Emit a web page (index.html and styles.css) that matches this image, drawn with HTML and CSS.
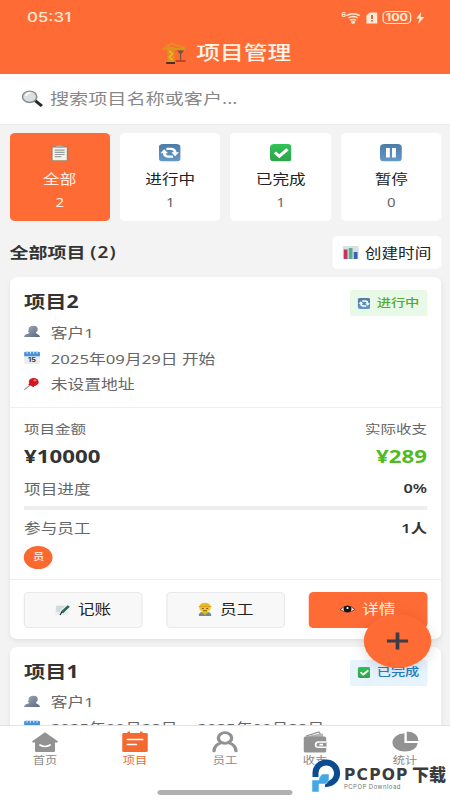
FILE: index.html
```html
<!DOCTYPE html>
<html lang="zh-CN">
<head>
<meta charset="utf-8">
<title>项目管理</title>
<link rel="stylesheet" href="styles.css">
</head>
<body>
<svg class="defs" width="0" height="0">
  <defs>
    <linearGradient id="blue" x2="0" y2="1"><stop offset="0" stop-color="#4d7ba5"/><stop offset="1" stop-color="#6499cb"/></linearGradient>
    <linearGradient id="green" x2="0" y2="1"><stop offset="0" stop-color="#2fc257"/><stop offset="1" stop-color="#30a24c"/></linearGradient>
    <linearGradient id="slate" x2="1" y2="1"><stop offset="0" stop-color="#a2adbd"/><stop offset="1" stop-color="#59687e"/></linearGradient>
    <symbol id="sync" viewBox="0 0 20 20"><rect width="20" height="20" rx="4" fill="url(#blue)"/><g fill="none" stroke="#fff" stroke-width="2.6"><path d="M7 5.500h4q4 0 4 5"/><path d="M13 14.500H9q-4 0-4-5"/></g><path d="M11.500 9.500h7L15 14zM1.500 10.500h7L5 6z" fill="#fff"/></symbol>
    <symbol id="check" viewBox="0 0 20 20"><rect width="20" height="20" rx="4" fill="url(#green)"/><path d="M4.500 9.500l4 4.500 7.500-8" fill="none" stroke="#fff" stroke-width="3"/></symbol>
    <symbol id="pause" viewBox="0 0 20 20"><rect width="20" height="20" rx="4" fill="url(#blue)"/><path d="M5.500 4.500h3.500v11H5.500zM11 4.500h3.500v11H11z" fill="#fff"/></symbol>
    <symbol id="person" viewBox="0 0 20 20"><path d="M11.500 1c4 0 5.500 2.500 5.300 5.500-.2 3-1.300 4-2.300 5 .3 1.500 4.500 2 5 6.500H.5c0-4 4-4.500 6.500-6-1-.8-1.500-1.500-2-2.500 1-.5.8-1.500.8-3C6 3 8 1 11.500 1z" fill="url(#slate)"/></symbol>
    <symbol id="calendar" viewBox="0 0 20 20"><rect x=".5" y="2" width="19" height="17.500" rx="2" fill="#e9edf0"/><path d="M.5 8V3q0-2 2-2h15q2 0 2 2v5z" fill="#4690dc"/><path d="M4 1v3M8 1v3M12 1v3M16 1v3" stroke="#d9ecff" stroke-width="1.300"/><text class="cal-day" x="10" y="17" text-anchor="middle">15</text></symbol>
    <symbol id="pin" viewBox="0 0 20 20"><path d="M9 11L.8 19" stroke="#8c9298" stroke-width="1.400"/><path d="M6.500 11q3 .5 5 3" fill="none" stroke="#b9131c" stroke-width="2" stroke-linecap="round"/><circle cx="12" cy="7.500" r="6" fill="#d4141f"/><circle cx="13.500" cy="5" r="1.800" fill="#f0646b"/></symbol>
  </defs>
</svg>
<div class="screen">
  <header class="header">
    <div class="status">
      <span class="clock">05:31</span>
      <span class="status-icons">
        <svg width="16" height="13" viewBox="0 0 16 13"><g fill="none" stroke="#ffe9d6" stroke-width="1.500"><path d="M4.200 4.700q5.300-3.800 10.600 0M5.700 7q3.800-2.800 7.600 0M7.200 9.300q2.300-1.700 4.600 0"/></g><circle cx="9.500" cy="11.200" r="1.500" fill="#ffe9d6"/><text class="wifi-gen" x="0" y="5.500">6</text></svg>
        <svg width="9" height="12" viewBox="0 0 9 12"><path d="M3 .5h5.500q.5 0 .5.500v10q0 .5-.5.500h-8Q0 11.500 0 11V3.500z" fill="#ffe9d6"/><path d="M4.600 3v4M4.600 8v1.500" stroke="#b85a35" stroke-width="1.300"/></svg>
        <span class="battery">100</span>
        <svg class="bolt" width="8" height="12" viewBox="0 0 8 12"><path d="M5 0L1 6.500h2.500L2.500 12 7.500 5H4.500z" fill="#ffe9d6"/></svg>
      </span>
    </div>
    <div class="title">
      <svg width="19" height="22" viewBox="0 0 19 22"><path d="M4 5h5.500v15H4z" fill="#dc9419"/><path d="M0 7.500L7 1.500l11 4.500M0 7h18" fill="none" stroke="#dc9419" stroke-width="1.800"/><path d="M5.500 9l2.500 3-2.500 3L8 18" fill="none" stroke="#f5bd45" stroke-width="1"/><path d="M14.500 8v10M12.500 9h4l-2 3z" stroke="#74583a" fill="#74583a"/><path d="M3 21h7" stroke="#4b2f25" stroke-width="2"/><path d="M10.500 19h8" stroke="#a93a22" stroke-width="1.500"/></svg>
      <h1>项目管理</h1>
    </div>
  </header>
  <div class="search">
    <svg width="18" height="18" viewBox="0 0 18 18"><path d="M11 10.500l5.500 5.500" stroke="#272727" stroke-width="2.600"/><circle cx="6.700" cy="6.800" r="5.700" fill="#dbe0e2" stroke="#8b8f91" stroke-width="1.300"/><path d="M3.500 6q1-3 4-3" fill="none" stroke="#fff" stroke-width="1.200"/></svg>
    <span>搜索项目名称或客户...</span>
  </div>
  <main class="content">
    <div class="filters">
      <div class="filter active"><svg class="big" viewBox="0 0 20 20"><rect x="2" y="2.500" width="16" height="17" rx="1" fill="#a8805d"/><path d="M3.500 4h13v14.500h-13z" fill="#f3f3ed"/><path d="M6.500 4V2H9l1-1.500L11 2h2.500v2z" fill="#a8aaa9"/><path d="M5.500 7h9M5.500 9.500h9M5.500 12h9M5.500 14.500h6" stroke="#999f9f" stroke-width="1.300"/></svg><b>全部</b><i>2</i></div>
      <div class="filter"><svg class="big"><use href="#sync"/></svg><b>进行中</b><i>1</i></div>
      <div class="filter"><svg class="big"><use href="#check"/></svg><b>已完成</b><i>1</i></div>
      <div class="filter"><svg class="big"><use href="#pause"/></svg><b>暂停</b><i>0</i></div>
    </div>
    <div class="list-head">
      <h2>全部项目 <span>(2)</span></h2>
      <div class="sort"><svg width="13" height="13" viewBox="0 0 13 13"><rect width="13" height="13" rx="1" fill="#d9dfe4"/><path d="M1 3.500h3V13H1z" fill="#c63558"/><path d="M5 2h3v11H5z" fill="#53af91"/><path d="M9 6h3v7H9z" fill="#3c63ad"/></svg><span>创建时间</span></div>
    </div>
    <article class="card">
      <section class="summary">
        <div class="name-row"><h3>项目2</h3><span class="badge doing"><svg><use href="#sync"/></svg>进行中</span></div>
        <p><svg><use href="#person"/></svg>客户1</p>
        <p><svg><use href="#calendar"/></svg>2025年09月29日 开始</p>
        <p><svg><use href="#pin"/></svg>未设置地址</p>
      </section>
      <section class="figures">
        <div class="row labels"><span>项目金额</span><span>实际收支</span></div>
        <div class="row money"><span>¥10000</span><span class="gain">¥289</span></div>
        <div class="row progress-label"><span>项目进度</span><b>0%</b></div>
        <div class="track"></div>
        <div class="row staff"><span>参与员工</span><b>1人</b></div>
        <div class="avatar">员</div>
      </section>
      <section class="actions">
        <div class="button"><svg width="12" height="13" viewBox="0 0 12 13"><path d="M1 2h8l2 10H0z" fill="#e8eeee"/><path d="M1 4h6M1 6h4M1 8h3" stroke="#b8c6c9"/><path d="M11 3L5.500 9.500" stroke="#28685c" stroke-width="2.400"/><path d="M5.500 9L4 12" stroke="#27292a"/></svg>记账</div>
        <div class="button"><svg width="12" height="14" viewBox="0 0 12 14"><path d="M1 14q0-4 3-4h4q3 0 3 4z" fill="#6d8e8b"/><path d="M3 10l3 3 3-3" fill="#e4b02d"/><circle cx="6" cy="5.800" r="4.600" fill="#f4c72e"/><path d="M1.500 4.500C2-.5 10-.5 10.500 4.500z" fill="#edb920"/><path d="M1 4.700h10" stroke="#cf9a18" stroke-width=".8"/><path d="M3.500 6.500h1.500M7 6.500h1.500M4.500 8.700h3" stroke="#7d571c"/></svg>员工</div>
        <div class="button primary"><svg width="12" height="12" viewBox="0 0 12 12"><path d="M0 6.500Q6-.5 12 6.500 6 12 0 6.500z" fill="#f3eeeb" stroke="#713b29" stroke-width=".8"/><circle cx="6" cy="6" r="3.200" fill="#171312"/><circle cx="6" cy="5" r=".9" fill="#fff"/></svg>详情</div>
      </section>
    </article>
    <article class="card">
      <section class="summary">
        <div class="name-row"><h3>项目1</h3><span class="badge done"><svg><use href="#check"/></svg>已完成</span></div>
        <p><svg><use href="#person"/></svg>客户1</p>
        <p class="range"><svg><use href="#calendar"/></svg>2025年09月28日 - 2025年09月28日</p>
      </section>
    </article>
  </main>
  <nav class="tabs">
    <div class="tab"><svg width="22" height="22" viewBox="0 0 22 22"><path d="M11 1.200L21 10q1 1.500-1 1.500h-1V20q0 1-1 1H4q-1 0-1-1v-8.500H2q-2 0-1-1.500z" fill="#929292"/><path d="M7 14q4 3 8 0" fill="none" stroke="#fff" stroke-width="1.600" stroke-linecap="round"/></svg><span>首页</span></div>
    <div class="tab on"><svg width="22" height="22" viewBox="0 0 22 22"><path d="M2 2h3V.5h2V2h8V.5h2V2h3q1.200 0 1.200 1.200v16.600Q21.200 21 20 21H2Q.8 21 .8 19.800V3.200Q.8 2 2 2z" fill="#f4692f"/><path d="M5 8.500h12M5 13.500h7" stroke="#fff" stroke-width="1.700" stroke-linecap="round"/></svg><span>项目</span></div>
    <div class="tab"><svg width="22" height="22" viewBox="0 0 22 22"><g fill="none" stroke="#929292" stroke-width="2.700" stroke-linecap="round"><circle cx="11" cy="7" r="5.300"/><path d="M7.500 12Q2.500 14 2.200 20M14.500 12q5 2 5.300 8"/></g></svg><span>员工</span></div>
    <div class="tab"><svg width="22" height="22" viewBox="0 0 22 22"><path d="M4 5l10-4 2 3" fill="none" stroke="#929292" stroke-width="1.200"/><path d="M7 4.500l8-2 2.500.5V6H3z" fill="#b5b5b5"/><path d="M3 5.500h15.500q1.500 0 1.500 1.500v13q0 1.500-1.500 1.500h-15Q2 21.500 2 20V6.500z" fill="#929292"/><path d="M20 11h-6q-2.500 0-2.500 2.700T14 16.200h6" fill="#929292" stroke="#fff" stroke-width="1.400"/><path d="M14.500 13.600h3" stroke="#fff" stroke-width="1.600"/></svg><span>收支</span></div>
    <div class="tab"><svg width="24" height="24" viewBox="0 0 24 24"><path d="M11.500 2.500v10.500h11.500A11 10 0 1 1 11.500 2.500z" fill="#929292"/><path d="M13.500 .5q10 .5 10.300 10.500H13.500z" fill="#929292"/></svg><span>统计</span></div>
  </nav>
  <div class="home-bar"></div>
  <div class="fab"><svg width="18" height="18" viewBox="0 0 18 18"><path d="M9 .5v17M.5 9h17" stroke="#3b3c48" stroke-width="3"/></svg></div>
</div>
<div class="watermark">
  <svg width="30" height="34" viewBox="0 0 30 34"><path d="M4.500 18v-4A10.800 10.800 0 1 1 15.500 25H14" fill="none" stroke="#0b4c91" stroke-width="6"/><path d="M1 21h7v-2l3-4h7v6l-3 4H8v8H1z" fill="#42a8e8" stroke="#fff" stroke-width=".5"/></svg>
  <div class="wm-text"><div class="wm-name"><span>PCPOP</span>下载</div><div class="wm-sub">PCPOP Download</div></div>
</div>
</body>
</html>
```
FILE: styles.css
```css
* { box-sizing: border-box; }
body { margin: 0; width: 450px; height: 800px; overflow: hidden; position: relative; background: #f3f3f3; }
.defs { position: absolute; }
/* The interface is laid out 360px wide and stretched to fill the window. */
.screen {
  width: 360px; height: 800px; position: relative; overflow: hidden;
  display: flex; flex-direction: column;
  transform: scaleX(1.25); transform-origin: 0 0;
  font-family: "Noto Sans", "Noto Sans CJK SC", sans-serif;
  font-size: 13.300px; color: #333; background: #f3f3f3;
}
h1, h2, h3, p { margin: 0; }
svg { flex: none; display: block; }

.header { height: 74px; flex: none; background: #ff6b35; color: #fff3e8; }
.status { height: 34px; padding: 0 20px 0 21.500px; display: flex; justify-content: space-between; align-items: center; }
.clock { font: 500 13.600px/34px Inter, sans-serif; color: #ffe9d6; letter-spacing: 0; }
.status-icons { display: flex; align-items: center; gap: 4px; padding-top: 1px; }
.wifi-gen { font: 700 6px Inter, sans-serif; fill: #ffe9d6; }
.battery { width: 23px; height: 13px; border: 1.200px solid #ffe9d6; border-radius: 4px; font: 700 10px/11px Inter, sans-serif; text-align: center; color: #ffe9d6; }
.bolt { margin-left: -1px; }
.title { height: 38px; display: flex; justify-content: center; align-items: center; gap: 8px; padding-left: 3px; }
.title h1 { font-size: 19px; font-weight: 500; line-height: 36px; }

.search { height: 51px; flex: none; background: #fff; border-bottom: 1px solid #ececec; padding-left: 16.500px; display: flex; align-items: center; gap: 5.500px; color: #888; font-size: 15.300px; }
.search span { line-height: 48px; padding-bottom: 2px; }

.content { padding: 8px 6.800px 0 7.600px; height: 600px; flex: none; overflow: hidden; }
.filters { display: grid; grid-template-columns: repeat(4, 1fr); gap: 8px; height: 87.500px; }
.filter { background: #fff; border-radius: 4px; display: flex; flex-direction: column; align-items: center; padding-top: 11px; }
.big { width: 17.500px; height: 17.500px; }
.filter b { font-weight: 400; font-size: 13.300px; line-height: 20px; margin-top: 7px; color: #222; }
.filter i { font-style: normal; font-size: 12px; line-height: 16px; margin-top: 6.500px; color: #666; }
.filter.active { background: #ff6b35; }
.filter.active b, .filter.active i { color: #fff0e5; }

.list-head { display: flex; justify-content: space-between; align-items: center; margin-top: 15px; height: 34px; }
.list-head h2 { font-size: 15.200px; font-weight: 600; line-height: 32px; padding-bottom: 2px; }
.list-head h2 span { letter-spacing: .8px; }
.sort { height: 33px; width: 87.500px; background: #fff; border-radius: 4px; display: flex; align-items: center; justify-content: center; gap: 5px; color: #222; }
.sort span { padding-bottom: 1px; }

.card { background: #fff; border-radius: 6px; margin-top: 7.500px; box-shadow: 0 2px 5px rgba(0,0,0,.07); }
.card + .card { height: 120px; margin-top: 8px; }
.summary { height: 130.500px; padding: 9px 11.700px 0; border-bottom: 1px solid #eee; }
.card + .card .summary { border: 0; }
.name-row { display: flex; justify-content: space-between; align-items: center; height: 32px; margin-bottom: 1px; }
.name-row h3 { font-size: 17px; font-weight: 700; line-height: 32px; }
.badge { height: 26px; margin-top: 2px; width: 62px; border-radius: 2px; display: flex; align-items: center; justify-content: center; gap: 5px; font-size: 11.400px; font-weight: 500; line-height: 22px; padding-bottom: 1px; }
.badge svg { width: 10.800px; height: 11px; margin-top: 1px; }
.doing { background: #e9f9e8; color: #52ad2d; }
.done { background: #e7f3fd; color: #2481c5; }
.summary p { display: flex; align-items: center; gap: 8px; height: 25.700px; color: #666; white-space: nowrap; font-size: 13.400px; }
.summary p svg { width: 13.300px; height: 13.300px; }
.summary .range { word-spacing: 2.300px; }
.cal-day { font: 700 9px Inter, sans-serif; fill: #333; }

.figures { height: 172.500px; padding: 9.500px 11.700px 0; border-bottom: 1px solid #eee; color: #666; }
.row { display: flex; justify-content: space-between; align-items: center; }
.row b { color: #333; font-weight: 600; font-size: 13px; }
.labels { font-size: 12.400px; height: 23px; }
.money { font-size: 17.800px; font-weight: 700; color: #333; height: 31.500px; }
.gain { color: #4fbb20; }
.progress-label { height: 33px; margin-bottom: 1px; }
.track { height: 4px; background: #eee; border-radius: 1px; }
.staff { height: 36px; }
.avatar { width: 23.200px; height: 23.200px; border-radius: 50%; background: #fb692f; color: #fff0e5; font-size: 9px; font-weight: 500; line-height: 22px; text-align: center; }

.actions { display: grid; grid-template-columns: repeat(3, 1fr); gap: 19px; padding: 12px 11.700px 0; height: 58.500px; }
.button { height: 35.500px; border: 1px solid #e9e9e9; border-radius: 4px; background: #f8f8f8; display: flex; align-items: center; justify-content: center; gap: 6px; color: #222; line-height: 30px; padding-bottom: 1px; }
.button.primary { background: #ff6b35; border-color: #ff6b35; color: #fff0e5; }

.tabs { height: 75px; flex: none; background: #fff; border-top: 1px solid #e3e3e3; display: grid; grid-template-columns: repeat(5, 1fr); }
.tab { display: flex; flex-direction: column; align-items: center; padding-top: 5px; font-size: 9.800px; color: #888; }
.tab svg { height: 22px; }
.tab span { line-height: 14px; margin-top: 1px; }
.tab.on { color: #f4692f; }
.home-bar { position: absolute; left: 126px; top: 789.500px; width: 108px; height: 5px; border-radius: 3px; background: #b0b0b0; }
.fab { position: absolute; left: 291.200px; top: 613.500px; width: 54px; height: 54px; border-radius: 50%; background: #ff6b35; display: flex; align-items: center; justify-content: center; box-shadow: 0 3px 12px rgba(0,0,0,.13); }

.watermark { position: absolute; left: 311px; top: 759px; display: flex; gap: 3px; font-family: Inter, "Noto Sans CJK SC", sans-serif; color: #3b3c40; }
.wm-text { padding-top: 7px; }
.wm-name { display: flex; align-items: center; font-size: 17px; font-weight: 900; line-height: 18px; height: 18px; white-space: nowrap; }
.wm-name span { width: 68px; font: 700 15.500px/18px "DejaVu Sans", sans-serif; letter-spacing: 1.200px; }
.wm-sub { font-size: 6px; line-height: 7px; letter-spacing: .45px; color: #777; margin-top: -1px; }
```
